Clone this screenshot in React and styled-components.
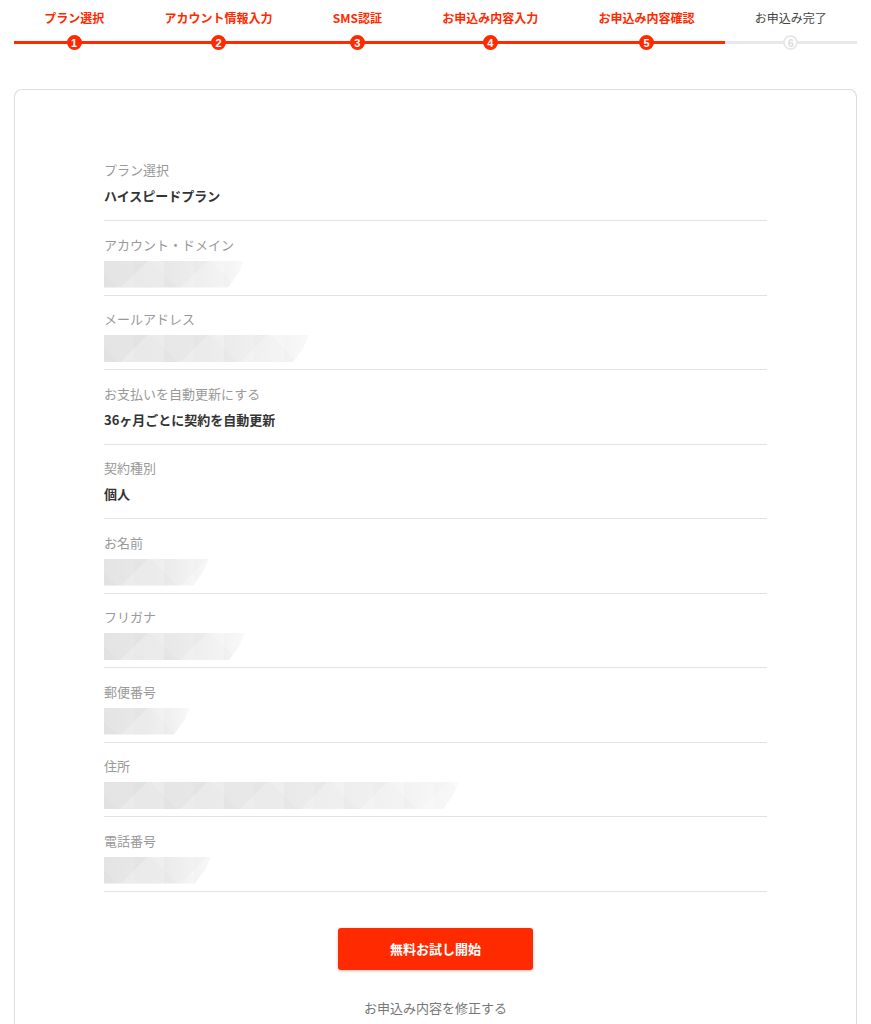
import React from "react";
import styled, { createGlobalStyle } from "styled-components";

const RED = "#ff2a00";

const steps = [
  { label: "プラン選択", done: true },
  { label: "アカウント情報入力", done: true },
  { label: "SMS認証", done: true },
  { label: "お申込み内容入力", done: true },
  { label: "お申込み内容確認", done: true },
  { label: "お申込み完了", done: false },
];

// mask = 個人情報を隠すグレーの帯
const rows = [
  { label: "プラン選択", value: "ハイスピードプラン" },
  { label: "アカウント・ドメイン", mask: 140 },
  { label: "メールアドレス", mask: 205 },
  { label: "お支払いを自動更新にする", value: "36ヶ月ごとに契約を自動更新" },
  { label: "契約種別", value: "個人" },
  { label: "お名前", mask: 105 },
  { label: "フリガナ", mask: 141 },
  { label: "郵便番号", mask: 86 },
  { label: "住所", mask: 355 },
  { label: "電話番号", mask: 107 },
];

const App = () => {
  return (
    <>
      <GlobalStyle />
      <Stepper>
        {steps.map((s, i) => (
          <Step key={s.label}>
            <StepLabel $done={s.done}>{s.label}</StepLabel>
            <Track $done={s.done}>
              <Dot $done={s.done}>{i + 1}</Dot>
            </Track>
          </Step>
        ))}
      </Stepper>

      <Card>
        <List>
          {rows.map((r) => (
            <Row key={r.label}>
              <Label>{r.label}</Label>
              {r.mask ? (
                <Mask style={{ width: r.mask }} />
              ) : (
                <Value>{r.value}</Value>
              )}
            </Row>
          ))}
        </List>
        <Actions>
          <SubmitButton>無料お試し開始</SubmitButton>
          <EditLink>お申込み内容を修正する</EditLink>
        </Actions>
      </Card>
    </>
  );
};

const GlobalStyle = createGlobalStyle`
  body {
    margin: 0;
    background: #ffffff;
    font-family: "Noto Sans CJK JP", "Noto Sans", sans-serif;
    color: #333333;
  }
`;

const Stepper = styled.div`
  display: flex;
  padding: 10px 14px 0;
`;

const Step = styled.div`
  flex: 1 1 auto;
  display: flex;
  flex-direction: column;
  align-items: center;
`;

const StepLabel = styled.div`
  font-size: 12px;
  line-height: 16px;
  font-weight: ${(p) => (p.$done ? 700 : 400)};
  color: ${(p) => (p.$done ? RED : "#444444")};
  white-space: nowrap;
`;

const Track = styled.div`
  position: relative;
  align-self: stretch;
  display: flex;
  justify-content: center;
  margin-top: 9px;
  height: 15px;

  &::before {
    content: "";
    position: absolute;
    left: 0;
    right: 0;
    top: 6px;
    height: 3px;
    background: ${(p) => (p.$done ? RED : "#e8e8e8")};
  }
`;

const Dot = styled.span`
  position: relative;
  width: 15px;
  height: 15px;
  box-sizing: border-box;
  border-radius: 50%;
  display: flex;
  align-items: center;
  justify-content: center;
  font-family: "Liberation Sans", Arial, sans-serif;
  font-size: 11px;
  font-weight: 700;
  background: ${(p) => (p.$done ? RED : "#ffffff")};
  border: 2px solid ${(p) => (p.$done ? RED : "#e8e8e8")};
  color: ${(p) => (p.$done ? "#ffffff" : "#dddddd")};
`;

const Card = styled.div`
  margin: 39px 14px 0;
  border: 1px solid #dcdcdc;
  border-bottom: none;
  border-radius: 8px 8px 0 0;
  padding: 70px 89px 8px;
`;

const List = styled.div`
  display: flex;
  flex-direction: column;
`;

const Row = styled.div`
  display: flex;
  flex-direction: column;
  align-items: flex-start;
  padding-top: 13.5px;
  border-bottom: 1px solid #e2e2e2;

  &:first-child {
    padding-top: 0;
  }
`;

const Label = styled.div`
  font-size: 13px;
  line-height: 20px;
  color: #999999;
`;

const Value = styled.div`
  margin: 6px 0 14px;
  font-size: 13px;
  line-height: 20px;
  font-weight: 700;
  color: #333333;
`;

const Mask = styled.div`
  margin: 6px 0 7px;
  height: 27px;
  background:
    linear-gradient(135deg, transparent 50%, rgba(255, 255, 255, 0.22) 50%) 0 0 / 60px 27px,
    linear-gradient(45deg, rgba(0, 0, 0, 0.012) 50%, transparent 50%) 30px 0 / 60px 27px,
    linear-gradient(90deg, #e4e4e4 0%, #e9e9e9 50%, #f1f1f1 80%, #f9f9f9 100%);
  clip-path: polygon(0 0, 100% 0, calc(100% - 6px) 50%, calc(100% - 16px) 100%, 0 100%);
`;

const Actions = styled.div`
  display: flex;
  flex-direction: column;
  align-items: center;
  padding-top: 36px;
`;

const SubmitButton = styled.button`
  width: 195px;
  height: 42px;
  border: none;
  border-radius: 3px;
  background: ${RED};
  color: #ffffff;
  font-family: inherit;
  font-size: 13px;
  font-weight: 700;
  box-shadow: 0 1px 3px rgba(0, 0, 0, 0.25);
  cursor: pointer;
`;

const EditLink = styled.a`
  margin-top: 28px;
  font-size: 13px;
  line-height: 20px;
  color: #777777;
  cursor: pointer;
`;

export default App;
